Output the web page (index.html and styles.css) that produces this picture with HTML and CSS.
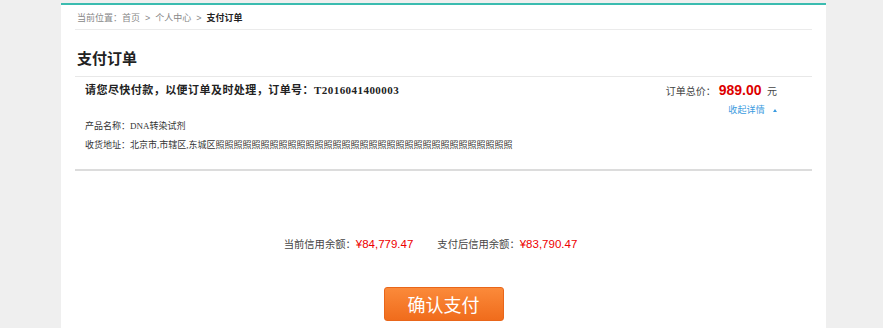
FILE: index.html
```html
<!DOCTYPE html>
<html lang="zh">
<head>
  <meta charset="UTF-8">
  <title>支付订单</title>
  <link rel="stylesheet" href="styles.css">
</head>
<body>

<div class="page">
  <div class="crumb">
    当前位置：<a href="#">首页</a><span class="sep">&gt;</span><a href="#">个人中心</a><span class="sep">&gt;</span><b>支付订单</b>
  </div>

  <h1 class="title">支付订单</h1>

  <div class="order">
    <div class="order-top">
      <div class="order-no">请您尽快付款，以便订单及时处理，订单号：<span class="num">T2016041400003</span></div>
      <div class="order-total">
        <div class="total-line">订单总价：<span class="price">989.00</span> 元</div>
        <a class="toggle" href="#">收起详情<span class="caret"></span></a>
      </div>
    </div>
    <div class="order-detail">
      <p>产品名称：DNA转染试剂</p>
      <p>收货地址：北京市,市辖区,东城区照照照照照照照照照照照照照照照照照照照照照照照照照照照照照照照照照</p>
    </div>
  </div>

  <div class="credit">
    <span>当前信用余额：<em>¥84,779.47</em></span>
    <span>支付后信用余额：<em>¥83,790.47</em></span>
  </div>

  <div class="actions">
    <button class="pay">确认支付</button>
  </div>
</div>

</body>
</html>
```

FILE: styles.css
```css
body {
  margin: 0;
  background: #efefef;
  font-family: "Liberation Serif", "Noto Sans CJK SC", serif;
  color: #333;
}
.page {
  margin-left: 61px;
  width: 737px;
  height: 328px;
  margin-top: 3px;
  padding: 0 14px;
  background: #fff;
  border-top: 2px solid #3bbcb0;
  overflow: hidden;
}
.crumb {
  height: 24px;
  line-height: 25px;
  font-size: 9px;
  color: #888;
  border-bottom: 1px solid #ebebeb;
  padding-left: 2px;
}
.crumb a {
  color: #888;
  text-decoration: none;
}
.crumb .sep {
  font-family: "Liberation Sans", sans-serif;
  margin: 0 5px;
}
.crumb b {
  color: #222;
  font-family: "Noto Sans CJK SC", sans-serif;
}
.title {
  margin: 0;
  height: 46px;
  line-height: 56px;
  font-family: "Noto Sans CJK SC", sans-serif;
  font-size: 15px;
  font-weight: bold;
  color: #222;
  border-bottom: 1px solid #e8e8e8;
  padding-left: 2px;
}
.order {
  height: 92px;
  border-bottom: 2px solid #dcdcdc;
}
.order-top {
  display: flex;
  justify-content: space-between;
  padding: 5px 35px 0 10px;
}
.order-no {
  line-height: 16px;
  font-size: 11px;
  font-weight: bold;
  color: #222;
  letter-spacing: 0.45px;
}
.order-total {
  text-align: right;
  font-size: 10px;
  color: #444;
}
.total-line {
  line-height: 16px;
}
.order-total .price {
  font-family: "Liberation Sans", sans-serif;
  font-size: 14px;
  font-weight: bold;
  color: #d00;
  margin: 0 3px;
}
.toggle {
  display: inline-block;
  margin-top: 2px;
  line-height: 16px;
  color: #3a9be0;
  text-decoration: none;
  font-size: 9px;
  letter-spacing: 0.2px;
}
.caret {
  display: inline-block;
  margin-left: 8px;
  border: 2px solid transparent;
  border-bottom: 3px solid #3a9be0;
  border-top: 0;
  vertical-align: middle;
}
.order-detail {
  padding: 2px 0 0 10px;
  font-size: 9px;
  color: #333;
}
.order-detail p {
  margin: 0 0 7px;
  line-height: 12px;
}
.credit {
  display: flex;
  justify-content: center;
  gap: 24px;
  margin-top: 65px;
  padding-right: 26px;
  line-height: 16px;
  font-size: 10.3px;
  color: #444;
}
.credit em {
  font-style: normal;
  font-family: "Liberation Sans", sans-serif;
  font-size: 11.5px;
  color: #e00;
}
.actions {
  display: flex;
  justify-content: center;
  margin-top: 34px;
}
.pay {
  width: 120px;
  height: 34px;
  border: 1px solid #e9661a;
  border-radius: 3px;
  background: linear-gradient(#fb8a3a, #f06c1c);
  color: #fff;
  font-family: "Noto Sans CJK SC", sans-serif;
  font-size: 18px;
  cursor: pointer;
}
```
